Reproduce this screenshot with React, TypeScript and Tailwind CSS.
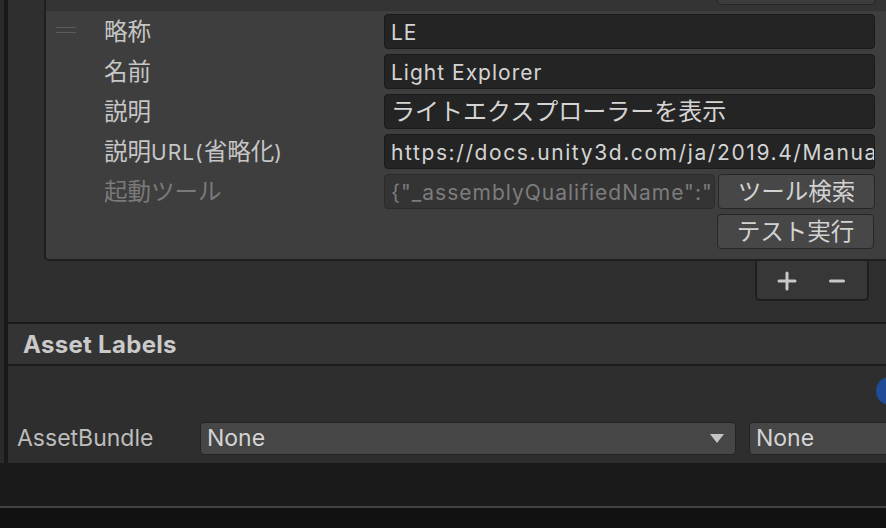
import React from "react";

function J({ children }: { children: React.ReactNode }) {
  return <span className="text-[23.5px] tracking-normal">{children}</span>;
}

const rows: {
  label: React.ReactNode;
  value: React.ReactNode;
  handle?: boolean;
  disabled?: boolean;
  button?: string;
  wide?: boolean;
}[] = [
  { label: <J>略称</J>, value: "LE", handle: true },
  { label: <J>名前</J>, value: "Light Explorer" },
  { label: <J>説明</J>, value: <span className="text-[24px] tracking-normal">ライトエクスプローラーを表示</span> },
  {
    label: (
      <>
        <J>説明</J>URL(<J>省略化</J>)
      </>
    ),
    value: "https://docs.unity3d.com/ja/2019.4/Manual/LightingExplorer.html",
    wide: true,
  },
  {
    label: <J>起動ツール</J>,
    value: '{"_assemblyQualifiedName":"UnityEditor.LightingExplorerWindow, UnityEditor"}',
    disabled: true,
    button: "ツール検索",
  },
];

function Button({ text }: { text: string }) {
  return (
    <div className="flex h-[35px] w-[157px] shrink-0 items-center justify-center rounded-[4px] border border-[#262626] bg-[#474747] text-[23.5px] tracking-normal text-[#d2d2d2]">
      {text}
    </div>
  );
}

export default function App() {
  return (
    <div className="flex h-[528px] w-[886px] flex-col overflow-hidden bg-[#111111] font-[Inter,'Noto_Sans_CJK_JP',sans-serif] text-[21px] leading-none">
      <div className="flex h-[463px] shrink-0">
        <div className="w-[4px] bg-[#2a2a2a]" />
        <div className="w-[4px] bg-[#191919]" />
        <div className="flex min-w-0 flex-1 flex-col bg-[#2f2f2f]">
          {/* reorderable list */}
          <div className="ml-[36px] flex flex-col rounded-bl-[5px] border-b-2 border-l-2 border-[#1f1f1f] bg-[#3e3e3e]">
            <div className="flex h-[11px] justify-end bg-[#343434] pr-[10px]">
              <div className="h-[5px] w-[159px] rounded-b-[5px] border-x border-b border-[#262626] bg-[#3c3c3c]" />
            </div>
            <div className="flex flex-col gap-[5px] pb-[10px] pt-[3px]">
              {rows.map((r, i) => (
                <div key={i} className="flex h-[35px] items-center">
                  <div className="flex w-[58px] shrink-0 pl-[10px]">
                    {r.handle && (
                      <div className="flex w-[20px] flex-col gap-[4px] pb-[3px]">
                        <div className="h-px bg-[#5c5c5c]" />
                        <div className="h-px bg-[#5c5c5c]" />
                      </div>
                    )}
                  </div>
                  <div
                    className={`w-[280px] shrink-0 whitespace-nowrap pt-[1px] tracking-[1px] ${
                      r.disabled ? "text-[#7a7a7a]" : "text-[#c6c6c6]"
                    }`}
                  >
                    {r.label}
                  </div>
                  <div className="mr-[11px] flex min-w-0 flex-1 gap-[3px]">
                    <div
                      className={`flex h-[35px] min-w-0 flex-1 items-center overflow-hidden whitespace-nowrap rounded-[4px] border pl-[6px] pt-[1px] ${
                        r.wide ? "tracking-[1.6px]" : "tracking-[1px]"
                      } ${
                        r.disabled
                          ? "border-[#2b2b2b] bg-[#343434] text-[#7c7c7c]"
                          : "border-[#1a1a1a] bg-[#242424] text-[#d4d4d4]"
                      }`}
                    >
                      {r.value}
                    </div>
                    {r.button && <Button text={r.button} />}
                  </div>
                </div>
              ))}
              <div className="mr-[12px] flex justify-end">
                <Button text="テスト実行" />
              </div>
            </div>
          </div>
          <div className="flex justify-end pr-[17px]">
            <div className="flex h-[40px] w-[114px] items-center gap-[32px] rounded-b-[5px] border-x-2 border-b-2 border-[#1f1f1f] bg-[#373737] pl-[20px] pt-[1px]">
              <svg width="20" height="20" viewBox="0 0 20 20">
                <path d="M10 2v16M2 10h16" stroke="#c8c8c8" strokeWidth="3" strokeLinecap="round" />
              </svg>
              <svg width="16" height="20" viewBox="0 0 16 20">
                <path d="M1.5 10h13" stroke="#c8c8c8" strokeWidth="3" strokeLinecap="round" />
              </svg>
            </div>
          </div>
          <div className="h-[21px]" />
          <div className="h-[2px] bg-[#1b1b1b]" />
          <div className="flex h-[40px] items-center bg-[#343434] pl-[15px] pt-[1px] text-[24px] font-bold tracking-[0.3px] text-[#cacaca]">
            Asset Labels
          </div>
          <div className="h-[2px] bg-[#1b1b1b]" />
          <div className="relative flex flex-1 flex-col justify-end overflow-hidden bg-[#2e2e2e] pb-[8px]">
            <div className="absolute left-[868px] top-[11px] h-[28px] w-[28px] rounded-full bg-[#1f4b97]" />
            <div className="flex h-[33px] items-center text-[23px]">
              <div className="w-[192px] shrink-0 pl-[9px] text-[#bdbdbd]">AssetBundle</div>
              <div className="flex h-[33px] w-[536px] shrink-0 items-center justify-between rounded-[4px] border border-[#222222] bg-[#464646] pl-[6px] pr-[11px] text-[#d4d4d4]">
                <span>None</span>
                <svg width="14" height="9" viewBox="0 0 14 9">
                  <path d="M0 0h14L7 9z" fill="#c4c4c4" />
                </svg>
              </div>
              <div className="ml-[13px] flex h-[33px] w-[160px] shrink-0 items-center rounded-[4px] border border-[#222222] bg-[#464646] pl-[6px] text-[#d4d4d4]">
                None
              </div>
            </div>
          </div>
        </div>
      </div>
      <div className="h-[43px] shrink-0 bg-[#1a1a1a]" />
      <div className="h-[2px] shrink-0 bg-[#414141]" />
      <div className="flex-1 bg-[#111111]" />
    </div>
  );
}
